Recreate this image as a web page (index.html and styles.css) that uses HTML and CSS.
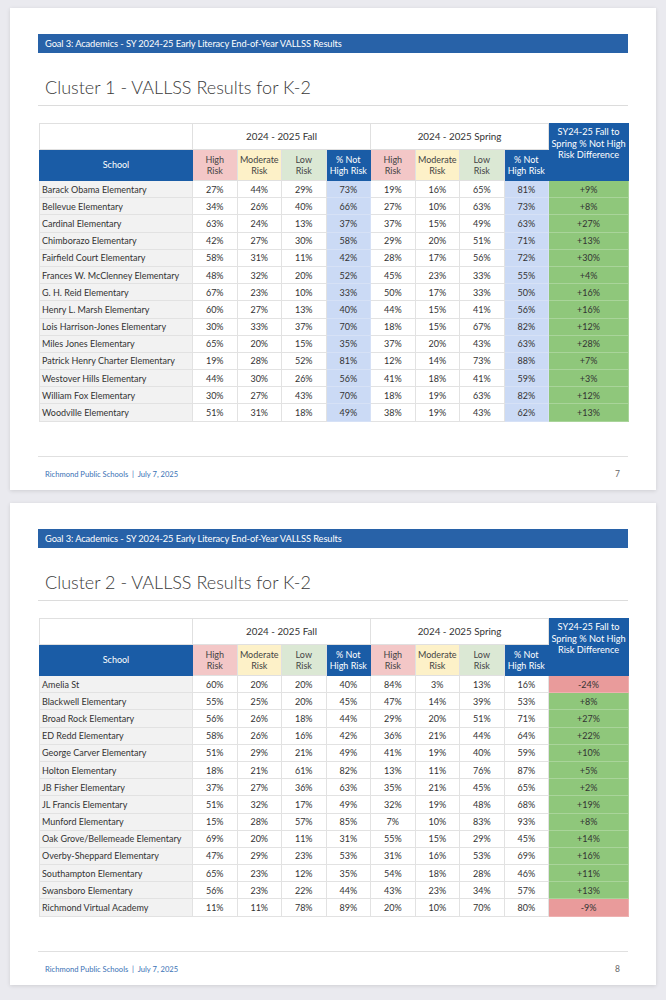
FILE: index.html
```html
<!DOCTYPE html>
<html>
<head>
<meta charset="utf-8">
<link rel="stylesheet" href="styles.css">
</head>
<body>
<div class="viewer">
  <section class="page">
    <div class="goal-bar">Goal 3: Academics - SY 2024-25 Early Literacy End-of-Year VALLSS Results</div>
    <h1 class="title">Cluster 1 - VALLSS Results for K-2</h1>
    <table class="results shaded">
      <colgroup>
        <col class="c-school"><col class="c-n"><col class="c-n"><col class="c-n"><col class="c-n">
        <col class="c-n"><col class="c-n"><col class="c-n"><col class="c-n"><col class="c-diff">
      </colgroup>
      <thead>
        <tr class="period">
          <th class="blank"></th>
          <th colspan="4">2024 - 2025 Fall</th>
          <th colspan="4">2024 - 2025 Spring</th>
          <th rowspan="2" class="h-blue diffh">SY24-25 Fall to<br>Spring % Not High<br>Risk Difference</th>
        </tr>
        <tr class="cats">
          <th class="h-blue">School</th>
          <th class="h-pink">High<br>Risk</th><th class="h-yellow">Moderate<br>Risk</th><th class="h-green">Low<br>Risk</th><th class="h-blue">% Not<br>High Risk</th>
          <th class="h-pink">High<br>Risk</th><th class="h-yellow">Moderate<br>Risk</th><th class="h-green">Low<br>Risk</th><th class="h-blue">% Not<br>High Risk</th>
        </tr>
      </thead>
      <tbody>
        <tr><td>Barack Obama Elementary</td><td>27%</td><td>44%</td><td>29%</td><td class="nh">73%</td><td>19%</td><td>16%</td><td>65%</td><td class="nh">81%</td><td class="pos">+9%</td></tr>
        <tr><td>Bellevue Elementary</td><td>34%</td><td>26%</td><td>40%</td><td class="nh">66%</td><td>27%</td><td>10%</td><td>63%</td><td class="nh">73%</td><td class="pos">+8%</td></tr>
        <tr><td>Cardinal Elementary</td><td>63%</td><td>24%</td><td>13%</td><td class="nh">37%</td><td>37%</td><td>15%</td><td>49%</td><td class="nh">63%</td><td class="pos">+27%</td></tr>
        <tr><td>Chimborazo Elementary</td><td>42%</td><td>27%</td><td>30%</td><td class="nh">58%</td><td>29%</td><td>20%</td><td>51%</td><td class="nh">71%</td><td class="pos">+13%</td></tr>
        <tr><td>Fairfield Court Elementary</td><td>58%</td><td>31%</td><td>11%</td><td class="nh">42%</td><td>28%</td><td>17%</td><td>56%</td><td class="nh">72%</td><td class="pos">+30%</td></tr>
        <tr><td>Frances W. McClenney Elementary</td><td>48%</td><td>32%</td><td>20%</td><td class="nh">52%</td><td>45%</td><td>23%</td><td>33%</td><td class="nh">55%</td><td class="pos">+4%</td></tr>
        <tr><td>G. H. Reid Elementary</td><td>67%</td><td>23%</td><td>10%</td><td class="nh">33%</td><td>50%</td><td>17%</td><td>33%</td><td class="nh">50%</td><td class="pos">+16%</td></tr>
        <tr><td>Henry L. Marsh Elementary</td><td>60%</td><td>27%</td><td>13%</td><td class="nh">40%</td><td>44%</td><td>15%</td><td>41%</td><td class="nh">56%</td><td class="pos">+16%</td></tr>
        <tr><td>Lois Harrison-Jones Elementary</td><td>30%</td><td>33%</td><td>37%</td><td class="nh">70%</td><td>18%</td><td>15%</td><td>67%</td><td class="nh">82%</td><td class="pos">+12%</td></tr>
        <tr><td>Miles Jones Elementary</td><td>65%</td><td>20%</td><td>15%</td><td class="nh">35%</td><td>37%</td><td>20%</td><td>43%</td><td class="nh">63%</td><td class="pos">+28%</td></tr>
        <tr><td>Patrick Henry Charter Elementary</td><td>19%</td><td>28%</td><td>52%</td><td class="nh">81%</td><td>12%</td><td>14%</td><td>73%</td><td class="nh">88%</td><td class="pos">+7%</td></tr>
        <tr><td>Westover Hills Elementary</td><td>44%</td><td>30%</td><td>26%</td><td class="nh">56%</td><td>41%</td><td>18%</td><td>41%</td><td class="nh">59%</td><td class="pos">+3%</td></tr>
        <tr><td>William Fox Elementary</td><td>30%</td><td>27%</td><td>43%</td><td class="nh">70%</td><td>18%</td><td>19%</td><td>63%</td><td class="nh">82%</td><td class="pos">+12%</td></tr>
        <tr><td>Woodville Elementary</td><td>51%</td><td>31%</td><td>18%</td><td class="nh">49%</td><td>38%</td><td>19%</td><td>43%</td><td class="nh">62%</td><td class="pos">+13%</td></tr>
      </tbody>
    </table>
    <footer class="foot">
      <span class="foot-left">Richmond Public Schools &nbsp;|&nbsp; July 7, 2025</span>
      <span class="foot-num">7</span>
    </footer>
  </section>

  <section class="page">
    <div class="goal-bar">Goal 3: Academics - SY 2024-25 Early Literacy End-of-Year VALLSS Results</div>
    <h1 class="title">Cluster 2 - VALLSS Results for K-2</h1>
    <table class="results">
      <colgroup>
        <col class="c-school"><col class="c-n"><col class="c-n"><col class="c-n"><col class="c-n">
        <col class="c-n"><col class="c-n"><col class="c-n"><col class="c-n"><col class="c-diff">
      </colgroup>
      <thead>
        <tr class="period">
          <th class="blank"></th>
          <th colspan="4">2024 - 2025 Fall</th>
          <th colspan="4">2024 - 2025 Spring</th>
          <th rowspan="2" class="h-blue diffh">SY24-25 Fall to<br>Spring % Not High<br>Risk Difference</th>
        </tr>
        <tr class="cats">
          <th class="h-blue">School</th>
          <th class="h-pink">High<br>Risk</th><th class="h-yellow">Moderate<br>Risk</th><th class="h-green">Low<br>Risk</th><th class="h-blue">% Not<br>High Risk</th>
          <th class="h-pink">High<br>Risk</th><th class="h-yellow">Moderate<br>Risk</th><th class="h-green">Low<br>Risk</th><th class="h-blue">% Not<br>High Risk</th>
        </tr>
      </thead>
      <tbody>
        <tr><td>Amelia St</td><td>60%</td><td>20%</td><td>20%</td><td>40%</td><td>84%</td><td>3%</td><td>13%</td><td>16%</td><td class="neg">-24%</td></tr>
        <tr><td>Blackwell Elementary</td><td>55%</td><td>25%</td><td>20%</td><td>45%</td><td>47%</td><td>14%</td><td>39%</td><td>53%</td><td class="pos">+8%</td></tr>
        <tr><td>Broad Rock Elementary</td><td>56%</td><td>26%</td><td>18%</td><td>44%</td><td>29%</td><td>20%</td><td>51%</td><td>71%</td><td class="pos">+27%</td></tr>
        <tr><td>ED Redd Elementary</td><td>58%</td><td>26%</td><td>16%</td><td>42%</td><td>36%</td><td>21%</td><td>44%</td><td>64%</td><td class="pos">+22%</td></tr>
        <tr><td>George Carver Elementary</td><td>51%</td><td>29%</td><td>21%</td><td>49%</td><td>41%</td><td>19%</td><td>40%</td><td>59%</td><td class="pos">+10%</td></tr>
        <tr><td>Holton Elementary</td><td>18%</td><td>21%</td><td>61%</td><td>82%</td><td>13%</td><td>11%</td><td>76%</td><td>87%</td><td class="pos">+5%</td></tr>
        <tr><td>JB Fisher Elementary</td><td>37%</td><td>27%</td><td>36%</td><td>63%</td><td>35%</td><td>21%</td><td>45%</td><td>65%</td><td class="pos">+2%</td></tr>
        <tr><td>JL Francis Elementary</td><td>51%</td><td>32%</td><td>17%</td><td>49%</td><td>32%</td><td>19%</td><td>48%</td><td>68%</td><td class="pos">+19%</td></tr>
        <tr><td>Munford Elementary</td><td>15%</td><td>28%</td><td>57%</td><td>85%</td><td>7%</td><td>10%</td><td>83%</td><td>93%</td><td class="pos">+8%</td></tr>
        <tr><td>Oak Grove/Bellemeade Elementary</td><td>69%</td><td>20%</td><td>11%</td><td>31%</td><td>55%</td><td>15%</td><td>29%</td><td>45%</td><td class="pos">+14%</td></tr>
        <tr><td>Overby-Sheppard Elementary</td><td>47%</td><td>29%</td><td>23%</td><td>53%</td><td>31%</td><td>16%</td><td>53%</td><td>69%</td><td class="pos">+16%</td></tr>
        <tr><td>Southampton Elementary</td><td>65%</td><td>23%</td><td>12%</td><td>35%</td><td>54%</td><td>18%</td><td>28%</td><td>46%</td><td class="pos">+11%</td></tr>
        <tr><td>Swansboro Elementary</td><td>56%</td><td>23%</td><td>22%</td><td>44%</td><td>43%</td><td>23%</td><td>34%</td><td>57%</td><td class="pos">+13%</td></tr>
        <tr><td>Richmond Virtual Academy</td><td>11%</td><td>11%</td><td>78%</td><td>89%</td><td>20%</td><td>10%</td><td>70%</td><td>80%</td><td class="neg">-9%</td></tr>
      </tbody>
    </table>
    <footer class="foot">
      <span class="foot-left">Richmond Public Schools &nbsp;|&nbsp; July 7, 2025</span>
      <span class="foot-num">8</span>
    </footer>
  </section>
</div>
</body>
</html>
```

FILE: styles.css
```css
* { box-sizing: border-box; }
html, body { margin: 0; padding: 0; }
body {
  background: #eaeaef;
  font-family: Lato, "Open Sans", "Liberation Sans", sans-serif;
  color: #333;
  width: 666px;
  height: 1000px;
  overflow: hidden;
}
.viewer {
  display: flex;
  flex-direction: column;
  gap: 13px;
  padding: 8px 10px 0 10px;
}
.page {
  background: #fff;
  height: 482px;
  box-shadow: 0 1px 4px rgba(0,0,0,0.12);
  padding: 26px 28px 0 28px;
  display: flex;
  flex-direction: column;
}
.goal-bar {
  background: #2862a8;
  color: #fff;
  font-size: 9.3px;
  height: 19px;
  line-height: 19px;
  padding-left: 7px;
  letter-spacing: -0.1px;
}
.title {
  margin: 0;
  font-weight: 300;
  font-size: 18px;
  color: #3a3a3a;
  height: 53px;
  line-height: 20px;
  padding: 24px 0 0 7px;
  border-bottom: 1px solid #dcdcdc;
}
.results {
  margin-top: 17px;
  margin-left: 1px;
  width: 589px;
  border-collapse: collapse;
  table-layout: fixed;
  font-size: 9px;
}
.c-school { width: 153px; }
.c-n { width: 44.5px; }
.c-diff { width: 80px; }
.results th {
  font-weight: 400;
  border: 1px solid #e0e0e0;
  padding: 0;
  line-height: 11.5px;
}
.period th {
  height: 26px;
  font-size: 9.8px;
  color: #333;
  background: #fff;
}
.cats th { height: 31px; color: #444; }
.results th.h-blue { background: #1a5ca6; color: #fff; border-color: #1a5ca6; }
.results th.h-pink { background: #f3c7c7; }
.results th.h-yellow { background: #fdf1c8; }
.results th.h-green { background: #dbe8d4; }
.results th.diffh {
  padding: 2px 0 0 0;
  vertical-align: top;
  font-size: 9.2px;
  line-height: 11.5px;
  white-space: nowrap;
}
.results td {
  height: 17.2px;
  padding: 0;
  text-align: center;
  border: 1px solid #e2e2e2;
  color: #333;
  line-height: 15px;
}
.results td:first-child {
  text-align: left;
  padding-left: 2px;
  background: #f2f2f2;
  white-space: nowrap;
  overflow: hidden;
}
.results td.nh { background: #cbdaf5; border-color: #d6e1f6; }
.results td.pos { background: #8fc77b; border-color: #a9d49a; }
.results td.neg { background: #e99b9b; border-color: #eeb0b0; }
.foot {
  margin-top: auto;
  border-top: 1px solid #e0e0e0;
  height: 34px;
  display: flex;
  justify-content: space-between;
  align-items: center;
  padding: 0 8px 0 7px;
}
.foot-left { color: #3a72b5; font-size: 7.6px; }
.foot-num { color: #666; font-size: 8.5px; }
```
